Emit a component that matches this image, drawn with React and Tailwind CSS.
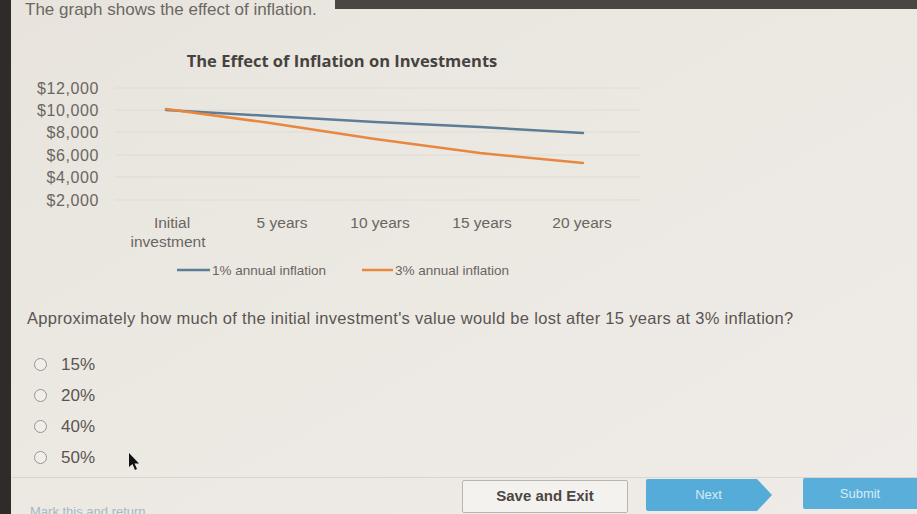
import React from "react";

const font = { fontFamily: '"Liberation Sans", Arial, sans-serif' };

const yTicks = [
  { label: "$12,000", y: 88 },
  { label: "$10,000", y: 110 },
  { label: "$8,000", y: 132 },
  { label: "$6,000", y: 155 },
  { label: "$4,000", y: 177 },
  { label: "$2,000", y: 200 },
];

const xTicks = [
  { label: "5 years", x: 282 },
  { label: "10 years", x: 380 },
  { label: "15 years", x: 482 },
  { label: "20 years", x: 582 },
];

function Chart() {
  return (
    <svg
      width="640"
      height="265"
      viewBox="11 20 640 265"
      className="block"
      style={font}
    >
      <text
        x="342"
        y="67"
        textAnchor="middle"
        fontSize="16.5"
        fontWeight="700"
        fill="#46423f"
        style={{ fontFamily: '"Open Sans", "Liberation Sans", sans-serif' }}
      >
        The Effect of Inflation on Investments
      </text>

      {yTicks.map((t) => (
        <g key={t.label}>
          <line x1="115" x2="640" y1={t.y} y2={t.y} stroke="#e0dbd3" strokeWidth="1" />
          <text
            x="99"
            y={t.y + 5.5}
            textAnchor="end"
            fontSize="16"
            letterSpacing="0.6"
            fill="#6a6561"
          >
            {t.label}
          </text>
        </g>
      ))}

      <text x="172" y="228" textAnchor="middle" fontSize="15.5" fill="#6a6561">
        Initial
      </text>
      <text x="168" y="247" textAnchor="middle" fontSize="15.5" fill="#6a6561">
        investment
      </text>
      {xTicks.map((t) => (
        <text key={t.label} x={t.x} y="228" textAnchor="middle" fontSize="15.5" fill="#6a6561">
          {t.label}
        </text>
      ))}

      {/* 1% series */}
      <polyline
        points="166,110 270,116 375,122 480,127 583,133"
        fill="none"
        stroke="#5d7d96"
        strokeWidth="2.5"
        strokeLinecap="round"
      />
      {/* 3% series */}
      <polyline
        points="166,109 270,123 375,139 480,153 583,163"
        fill="none"
        stroke="#e8873f"
        strokeWidth="2.5"
        strokeLinecap="round"
      />

      {/* legend */}
      <line x1="177" x2="210" y1="270" y2="270" stroke="#5d7d96" strokeWidth="2.5" />
      <text x="212" y="274.5" fontSize="13.5" fill="#6a6561">
        1% annual inflation
      </text>
      <line x1="362" x2="393" y1="270" y2="270" stroke="#e8873f" strokeWidth="2.5" />
      <text x="395" y="274.5" fontSize="13.5" fill="#6a6561">
        3% annual inflation
      </text>
    </svg>
  );
}

function Option({ label }) {
  return (
    <div className="flex h-[31px] items-center pl-[23px]">
      <span className="h-[13px] w-[13px] rounded-full border-[1.5px] border-[#98938e] bg-[#f1eee9]" />
      <span className="ml-[14px] text-[17px] text-[#5a5552]">{label}</span>
    </div>
  );
}

export default function App() {
  return (
    <div
      className="relative flex h-[514px] w-[917px] overflow-hidden bg-[#ebe7e1]"
      style={font}
    >
      <div className="w-[11px] shrink-0 bg-[#2f2b29]" />

      <div className="flex min-w-0 flex-1 flex-col bg-gradient-to-br from-[#e8e4dd] via-[#ece9e3] to-[#efebe8]">
        {/* header strip */}
        <div className="flex h-[20px] items-start">
          <span className="w-[324px] shrink-0 whitespace-nowrap pl-[14px] text-[17px] leading-[20px] text-[#6b6763]">
            The graph shows the effect of inflation.
          </span>
          <div className="h-[9px] flex-1 bg-[#4a4644]" />
        </div>

        <Chart />

        <p className="mt-[23px] pl-[16px] text-[16.5px] leading-[20px] tracking-[0.3px] text-[#5a5552]">
          Approximately how much of the initial investment's value would be lost after 15 years at 3% inflation?
        </p>

        <div className="mt-[21px] flex flex-col">
          <Option label="15%" />
          <Option label="20%" />
          <Option label="40%" />
          <Option label="50%" />
        </div>

        <div className="mt-[4px] border-t border-[#d9d4cc]" />

        {/* footer */}
        <div className="relative flex flex-1 items-start">
          <span className="absolute left-[19px] top-[24px] text-[13px] text-[#a7b8c4]">
            Mark this and return
          </span>
          <div className="ml-[451px] mt-[2px] flex h-[33px] w-[166px] items-center justify-center rounded-[2px] border border-[#b9b4ae] bg-[#f4f2ee] text-[15px] font-bold text-[#4a4643]">
            Save and Exit
          </div>
          <div className="ml-[18px] mt-[1px] flex h-[32px] w-[126px] items-center">
            <div className="flex h-full flex-1 items-center justify-center rounded-l-[2px] bg-[#55acd9] pl-[14px] text-[13px] text-[#d6ebf6]">
              Next
            </div>
            <svg width="15" height="32" viewBox="0 0 15 32" className="block">
              <polygon points="0,0 15,16 0,32" fill="#55acd9" />
            </svg>
          </div>
          <div className="ml-[31px] flex h-[31px] flex-1 items-center justify-center rounded-l-[2px] bg-[#5aafda] text-[13px] text-[#d6ebf6]">
            Submit
          </div>
        </div>
      </div>

      {/* mouse pointer */}
      <svg
        className="absolute left-[128px] top-[452px]"
        width="14"
        height="20"
        viewBox="0 0 14 20"
      >
        <polygon points="1,1 1,15 4.5,12 7,18 9,17 6.5,11.5 11,11.5" fill="#111" />
      </svg>
    </div>
  );
}
